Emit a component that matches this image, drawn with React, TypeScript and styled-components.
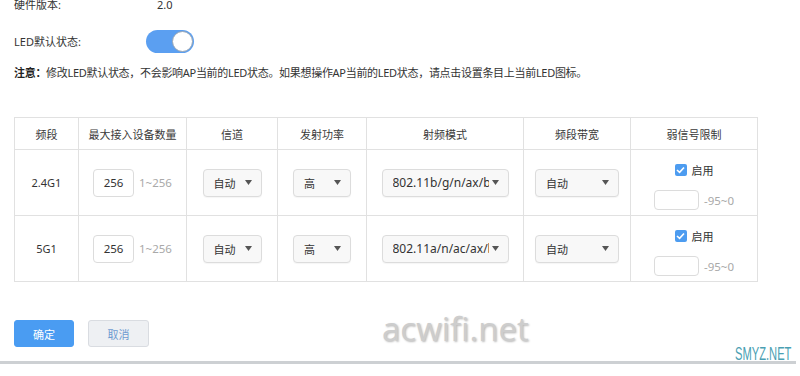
import React from "react";
import styled, { createGlobalStyle } from "styled-components";

const GlobalStyle = createGlobalStyle`
  html, body { margin: 0; padding: 0; background: #ffffff; }
  body {
    font-family: "Noto Sans", "Noto Sans CJK SC", sans-serif;
    font-size: 11px;
    color: #333333;
  }
  * { box-sizing: border-box; }
`;

const Page = styled.div`
  position: relative;
  width: 800px;
  height: 376px;
  overflow: hidden;
  background: #ffffff;
`;

const Content = styled.div`
  padding-left: 14px;
  display: flex;
  flex-direction: column;
  align-items: flex-start;
`;

const InfoRow = styled.div<{ $h: number; $mt: number }>`
  display: flex;
  align-items: center;
  height: ${(p) => p.$h}px;
  margin-top: ${(p) => p.$mt}px;
  line-height: ${(p) => p.$h}px;
`;

const Label = styled.div`
  width: 132px;
  color: #333333;
`;

const Value = styled.div`
  padding-left: 11px;
  color: #333333;
`;

const Toggle = styled.div<{ $on: boolean }>`
  width: 48px;
  height: 23px;
  border-radius: 12px;
  background: ${(p) => (p.$on ? "#5b9ff1" : "#cccccc")};
  display: flex;
  align-items: center;
  justify-content: ${(p) => (p.$on ? "flex-end" : "flex-start")};
  padding: 0 1px;
`;

const Knob = styled.div`
  width: 21px;
  height: 21px;
  border-radius: 50%;
  background: #ffffff;
  border: 1px solid #9aa7b5;
`;

const Note = styled.div`
  margin-top: 13px;
  line-height: 14px;
  letter-spacing: -0.3px;
  color: #333333;
  strong { font-weight: 700; color: #222222; }
`;

const Table = styled.table`
  margin-top: 37px;
  width: 743px;
  table-layout: fixed;
  border-collapse: collapse;
  border: 1px solid #e1e1e1;
`;

const Col = styled.col<{ $w: number }>`
  width: ${(p) => p.$w}px;
`;

const Th = styled.th`
  height: 32px;
  border: 1px solid #e1e1e1;
  font-weight: 400;
  color: #3a3a3a;
  text-align: center;
  vertical-align: middle;
  padding: 0;
`;

const Td = styled.td<{ $pt?: number }>`
  height: 66px;
  border: 1px solid #e1e1e1;
  text-align: center;
  vertical-align: middle;
  padding: ${(p) => p.$pt ?? 0}px 0 0 0;
  color: #333333;
`;

const Inline = styled.div`
  display: inline-flex;
  align-items: center;
  gap: 5px;
`;

const NumInput = styled.input<{ $w: number; $h: number }>`
  width: ${(p) => p.$w}px;
  height: ${(p) => p.$h}px;
  border: 1px solid #dcdcdc;
  border-radius: 4px;
  background: #ffffff;
  text-align: center;
  font-family: inherit;
  font-size: 11.5px;
  color: #333333;
  padding: 0;
  outline: none;
`;

const Hint = styled.span`
  color: #a9a9a9;
  font-size: 11.5px;
`;

const Select = styled.div<{ $w: number }>`
  display: inline-flex;
  align-items: center;
  justify-content: space-between;
  width: ${(p) => p.$w}px;
  height: 28px;
  padding: 0 9px 0 10px;
  border: 1px solid #dcdcdc;
  border-radius: 4px;
  background: #f8f8f8;
  box-shadow: 0 1px 1px rgba(0, 0, 0, 0.04);
  text-align: left;
  vertical-align: middle;
`;

const SelectText = styled.span<{ $clip?: number }>`
  white-space: nowrap;
  overflow: hidden;
  ${(p) => (p.$clip ? `width: ${p.$clip}px; flex: none; font-size: 12px;` : "")}
`;

const Arrow = () => (
  <svg width="7" height="5" viewBox="0 0 7 5">
    <path d="M0 0 H7 L3.5 5 Z" fill="#555555" />
  </svg>
);

const WeakCell = styled.div`
  display: flex;
  flex-direction: column;
  align-items: center;
  gap: 13px;
`;

const CheckRow = styled.div`
  display: flex;
  align-items: center;
  gap: 5px;
  height: 14px;
`;

const Check = styled.span`
  width: 12px;
  height: 12px;
  border-radius: 2px;
  background: #4d9cf0;
  display: inline-flex;
  align-items: center;
  justify-content: center;
`;

const Buttons = styled.div`
  margin-top: 38px;
  display: flex;
  gap: 14px;
`;

const Button = styled.button<{ $primary?: boolean }>`
  width: ${(p) => (p.$primary ? 60 : 61)}px;
  height: 27px;
  border-radius: 3px;
  font-family: inherit;
  font-size: 11px;
  cursor: pointer;
  border: 1px solid ${(p) => (p.$primary ? "#4a9cf2" : "#d9dce1")};
  background: ${(p) => (p.$primary ? "#4a9cf2" : "#eef0f3")};
  color: ${(p) => (p.$primary ? "#ffffff" : "#6e9bd1")};
`;

const Divider = styled.div`
  margin-top: 14px;
  width: 796px;
  height: 3px;
  background: #cdd0d3;
`;

const Watermark = styled.div`
  position: absolute;
  left: 382px;
  top: 306px;
  font-family: "Open Sans", sans-serif;
  font-size: 33px;
  color: #cdcdcd;
  text-shadow: 1px 1px 2px rgba(0, 0, 0, 0.28);
`;

const SiteMark = styled.div`
  position: absolute;
  left: 735px;
  top: 344px;
  font-family: "Liberation Sans", sans-serif;
  font-size: 18px;
  line-height: 21px;
  color: #4a9fb3;
  transform: scaleX(0.62);
  transform-origin: left center;
`;

type RowData = {
  band: string;
  max: string;
  channel: string;
  power: string;
  mode: string;
  width: string;
};

const rows: RowData[] = [
  { band: "2.4G1", max: "256", channel: "自动", power: "高", mode: "802.11b/g/n/ax/bgn", width: "自动" },
  { band: "5G1", max: "256", channel: "自动", power: "高", mode: "802.11a/n/ac/ax/bgn", width: "自动" },
];

const headers = ["频段", "最大接入设备数量", "信道", "发射功率", "射频模式", "频段带宽", "弱信号限制"];
const widths = [64, 108, 91, 89, 157, 107, 127];

export default function App() {
  return (
    <>
      <GlobalStyle />
      <Page>
        <Content>
          <InfoRow $h={12} $mt={-1}>
            <Label>硬件版本:</Label>
            <Value>2.0</Value>
          </InfoRow>
          <InfoRow $h={23} $mt={19}>
            <Label>LED默认状态:</Label>
            <Toggle $on>
              <Knob />
            </Toggle>
          </InfoRow>
          <Note>
            <strong>注意：</strong>修改LED默认状态，不会影响AP当前的LED状态。如果想操作AP当前的LED状态，请点击设置条目上当前LED图标。
          </Note>
          <Table>
            <colgroup>
              {widths.map((w, i) => (
                <Col key={i} $w={w} />
              ))}
            </colgroup>
            <thead>
              <tr>
                {headers.map((h) => (
                  <Th key={h}>{h}</Th>
                ))}
              </tr>
            </thead>
            <tbody>
              {rows.map((r) => (
                <tr key={r.band}>
                  <Td>{r.band}</Td>
                  <Td>
                    <Inline>
                      <NumInput $w={41} $h={28} readOnly value={r.max} />
                      <Hint>1~256</Hint>
                    </Inline>
                  </Td>
                  <Td>
                    <Select $w={59}>
                      <SelectText>{r.channel}</SelectText>
                      <Arrow />
                    </Select>
                  </Td>
                  <Td>
                    <Select $w={58}>
                      <SelectText>{r.power}</SelectText>
                      <Arrow />
                    </Select>
                  </Td>
                  <Td>
                    <Select $w={127}>
                      <SelectText $clip={96}>{r.mode}</SelectText>
                      <Arrow />
                    </Select>
                  </Td>
                  <Td>
                    <Select $w={84}>
                      <SelectText>{r.width}</SelectText>
                      <Arrow />
                    </Select>
                  </Td>
                  <Td $pt={8}>
                    <WeakCell>
                      <CheckRow>
                        <Check>
                          <svg width="9" height="8" viewBox="0 0 9 8">
                            <path d="M1 4 L3.6 6.4 L8 1.5" stroke="#ffffff" strokeWidth="1.6" fill="none" />
                          </svg>
                        </Check>
                        <span>启用</span>
                      </CheckRow>
                      <Inline>
                        <NumInput $w={45} $h={20} readOnly value="" />
                        <Hint>-95~0</Hint>
                      </Inline>
                    </WeakCell>
                  </Td>
                </tr>
              ))}
            </tbody>
          </Table>
          <Buttons>
            <Button $primary>确定</Button>
            <Button>取消</Button>
          </Buttons>
        </Content>
        <Divider />
        <Watermark>acwifi.net</Watermark>
        <SiteMark>SMYZ.NET</SiteMark>
      </Page>
    </>
  );
}
